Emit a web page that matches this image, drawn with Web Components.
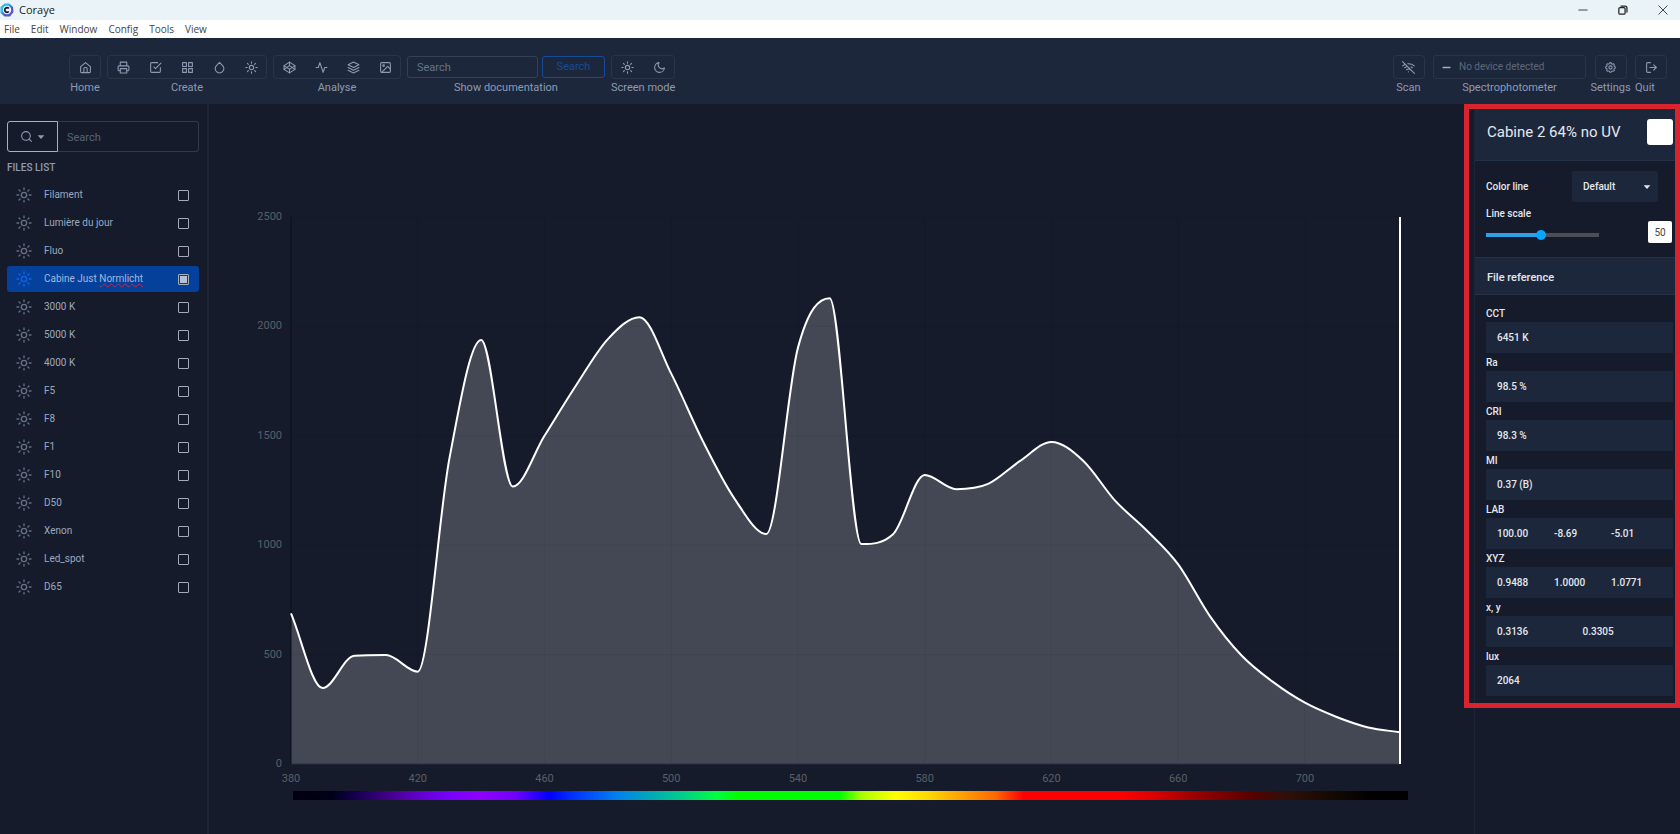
<!DOCTYPE html>
<html lang="en">
<head>
<meta charset="utf-8">
<title>Coraye</title>
<style>
  html, body { margin: 0; }
  body {
    --bg: #151b2a;
    --bar: #1d273b;
    --line: #2b3548;
    --text: #8d9bb2;
    background: var(--bg);
    color: var(--text);
    font-family: Roboto, "Liberation Sans", sans-serif;
    font-size: 11px;
    line-height: 14px;
  }
</style>
</head>
<body>
<cy-app></cy-app>

<script>
class Base extends HTMLElement {
  constructor() {
    super();
    this.attachShadow({ mode: "open" });
  }
  connectedCallback() {
    const t = document.createElement("template");
    t.innerHTML = `<style>*{box-sizing:border-box}button,input,select{font:inherit;color:inherit;margin:0}${this.css()}</style>${this.html()}`;
    this.shadowRoot.replaceChildren(t.content.cloneNode(true));
  }
}

const ICONS = {
  home: '<path d="M3 10.5 12 3l9 7.500V20a1.500 1.500 0 0 1-1.500 1.500h-15A1.500 1.500 0 0 1 3 20z"/><path d="M9 21v-7a2 2 0 0 1 2-2h2a2 2 0 0 1 2 2v7"/>',
  printer: '<path d="M6 9V2h12v7M6 18H4a2 2 0 0 1-2-2v-5a2 2 0 0 1 2-2h16a2 2 0 0 1 2 2v5a2 2 0 0 1-2 2h-2"/><path d="M6 14h12v8H6z"/>',
  check: '<path d="m9 11 3 3L22 4"/><path d="M21 12v7a2 2 0 0 1-2 2H5a2 2 0 0 1-2-2V5a2 2 0 0 1 2-2h11"/>',
  grid: '<path d="M3 3h7v7H3zM14 3h7v7h-7zM14 14h7v7h-7zM3 14h7v7H3z"/>',
  drop: '<path d="M12 2.700l5.700 5.700a8 8 0 1 1-11.300 0z"/>',
  sun: '<circle cx="12" cy="12" r="4"/><path d="M12 1.500v2.500M12 20v2.500M4.500 4.500l1.700 1.700M17.800 17.800l1.700 1.700M1.500 12H4M20 12h2.500M4.500 19.500l1.700-1.700M17.800 6.200l1.700-1.700"/>',
  poly: '<path d="M12 2l10 6.500v7L12 22 2 15.500v-7z"/><path d="M12 22v-6.500M22 8.500l-10 7-10-7"/><path d="M2 15.500l10-7 10 7M12 2v6.500"/>',
  pulse: '<path d="M22 12h-4l-3 9L9 3l-3 9H2"/>',
  layers: '<path d="M12 2 2 7l10 5 10-5z"/><path d="m2 17 10 5 10-5M2 12l10 5 10-5"/>',
  image: '<rect x="3" y="3" width="18" height="18" rx="2"/><circle cx="8.500" cy="8.500" r="1.500"/><path d="m21 15-5-5L5 21"/>',
  moon: '<path d="M21 12.800A9 9 0 1 1 11.200 3 7 7 0 0 0 21 12.800z"/>',
  wifioff: '<path d="M1 1l22 22M16.700 11.100A11 11 0 0 1 19 12.500M5 12.500a11 11 0 0 1 5.200-2.400M10.700 5.100A16 16 0 0 1 22.600 9M1.400 9a16 16 0 0 1 4.700-2.900M8.500 16.100a6 6 0 0 1 7 0M12 20h.01"/>',
  minus: '<path d="M3 12h18"/>',
  gear: '<circle cx="12" cy="12" r="3"/><path d="M10.300 4.300c.4-1.700 2.900-1.700 3.400 0a1.700 1.700 0 0 0 2.600 1.100c1.500-.9 3.300.8 2.400 2.400a1.700 1.700 0 0 0 1 2.500c1.800.4 1.800 2.900 0 3.400a1.700 1.700 0 0 0-1 2.600c.9 1.500-.9 3.300-2.400 2.400a1.700 1.700 0 0 0-2.600 1c-.5 1.800-3 1.800-3.400 0a1.700 1.700 0 0 0-2.600-1c-1.500.9-3.300-.9-2.400-2.400a1.700 1.700 0 0 0-1-2.600c-1.800-.5-1.800-3 0-3.400a1.700 1.700 0 0 0 1-2.600c-.9-1.500.9-3.300 2.400-2.400 1 .6 2.300.1 2.600-1z"/>',
  quit: '<path d="M10 21H5a2 2 0 0 1-2-2V5a2 2 0 0 1 2-2h5M16 17l5-5-5-5M21 12H9"/>',
  search: '<circle cx="11" cy="11" r="8"/><path d="m21 21-4.300-4.300"/>',
  caret: '<path fill="currentColor" stroke="none" d="M2 7h20L12 18z"/>',
  min: '<path d="M2 12h20"/>',
  restore: '<rect x="2" y="6" width="15" height="16" rx="3"/><path d="M7 2.500h10a4.500 4.500 0 0 1 4.500 4.500v10"/>',
  close: '<path d="M2 2l20 20M22 2 2 22"/>'
};

customElements.define("cy-icon", class extends Base {
  css() {
    const s = this.getAttribute("size") || 13;
    return `:host{display:block;flex:none;width:${s}px;height:${s}px}svg{display:block;width:100%;height:100%;fill:none;stroke:currentColor;stroke-linecap:round;stroke-linejoin:round}`;
  }
  html() {
    return `<svg viewBox="0 0 24 24" stroke-width="${this.getAttribute("weight") || 2}" aria-hidden="true">${ICONS[this.getAttribute("name")]}</svg>`;
  }
});

customElements.define("cy-window-bar", class extends Base {
  css() {
    return `
      :host{display:flex;align-items:center;height:20px;background:#eaf3f8;color:#222;font:11px/20px "Open Sans",sans-serif}
      .logo{width:14px;height:14px;margin-right:5px}
      .controls{margin-left:auto;display:flex;gap:12px;padding-right:3px}
      button{width:28px;height:18px;border:0;background:none;padding:0;display:grid;place-items:center;color:#222}`;
  }
  html() {
    return `
      <svg class="logo" viewBox="0 0 14 14" aria-hidden="true">
        <defs><linearGradient id="g" x1="0" y1="0" x2="1" y2="1"><stop offset=".35" stop-color="#35b8e8"/><stop offset=".6" stop-color="#5b55c8"/></linearGradient></defs>
        <path d="M4.500.5h5L13 4l.5 5-3.500 4.500H4.500L.5 10V4z" fill="url(#g)"/>
        <circle cx="7" cy="7" r="4.200" fill="#f4fbff"/>
        <path d="M8.800 5.500a2.300 2.300 0 1 0 0 3" fill="none" stroke="#10182c" stroke-width="1.800"/>
      </svg>
      <span>Coraye</span>
      <div class="controls">
        <button aria-label="Minimise"><cy-icon name="min" size="10"></cy-icon></button>
        <button aria-label="Restore"><cy-icon name="restore" size="10" weight="3"></cy-icon></button>
        <button aria-label="Close"><cy-icon name="close" size="10"></cy-icon></button>
      </div>`;
  }
});

customElements.define("cy-menu-bar", class extends Base {
  css() {
    return `
      :host{display:block;height:18px;background:#fff;color:#444;font:10px/18px "Open Sans",sans-serif}
      nav{display:flex;gap:11px;padding-left:4px}
      a{color:inherit;text-decoration:none}`;
  }
  html() {
    return `<nav>${["File", "Edit", "Window", "Config", "Tools", "View"].map(m => `<a href="#">${m}</a>`).join("")}</nav>`;
  }
});

/* A framed strip of icon buttons with a caption under it */
customElements.define("cy-tool-group", class extends Base {
  css() {
    return `
      :host{display:flex;flex-direction:column;align-items:center;gap:2px;white-space:nowrap}
      :host([caption-start]){align-items:flex-start}
      .box{display:flex;align-items:center;height:24px;gap:4px}
      .frame{box-shadow:inset 0 0 0 1px var(--line);border-radius:4px;gap:0}
      .caption{flex:none}
      :host([narrow]) {width:33px}
      button{width:32px;height:24px;border:0;background:none;padding:0;display:grid;place-items:center}`;
  }
  html() {
    const icons = this.getAttribute("icons");
    const box = icons
      ? `<div class="box frame">${icons.split(" ").map(i => { const [n, l] = i.split(":"); return `<button aria-label="${l}"><cy-icon name="${n}"></cy-icon></button>`; }).join("")}</div>`
      : `<div class="box"><slot></slot></div>`;
    return `${box}<div class="caption">${this.getAttribute("caption")}</div>`;
  }
});

customElements.define("cy-toolbar", class extends Base {
  css() {
    return `
      :host{display:flex;justify-content:space-between;height:66px;padding:17px 12px 0 69px;background:var(--bar)}
      .side{display:flex;align-items:flex-start;gap:6px}
      .right{gap:8px}
      input,.doc{height:22px;border:1px solid #344056;border-radius:3px;background:none}
      input{width:131px;padding:1px 9px 0;outline:0}
      input::placeholder{color:#66738a;opacity:1}
      .doc{width:63px;border-color:#174a98;color:#164a9c;padding:0}
      .device{display:flex;align-items:center;gap:8px;width:153px;height:24px;padding-left:8px;border:1px solid var(--line);border-radius:3px;font-size:10px;color:#5d687a}
      .device cy-icon{color:#a3adbd}`;
  }
  html() {
    return `
      <div class="side">
        <cy-tool-group icons="home:Home" caption="Home"></cy-tool-group>
        <cy-tool-group icons="printer:Print check:Check grid:Grid drop:Ink sun:Light" caption="Create"></cy-tool-group>
        <cy-tool-group icons="poly:Gamut pulse:Curve layers:Layers image:Image" caption="Analyse"></cy-tool-group>
        <cy-tool-group caption="Show documentation"><input type="text" placeholder="Search" aria-label="Search documentation"><button class="doc">Search</button></cy-tool-group>
        <cy-tool-group icons="sun:Light moon:Dark" caption="Screen mode"></cy-tool-group>
      </div>
      <div class="side right">
        <cy-tool-group narrow icons="wifioff:Scan" caption="Scan"></cy-tool-group>
        <cy-tool-group caption="Spectrophotometer"><div class="device"><cy-icon name="minus" size="9" weight="4"></cy-icon>No device detected</div></cy-tool-group>
        <cy-tool-group narrow icons="gear:Settings" caption="Settings"></cy-tool-group>
        <cy-tool-group narrow caption-start icons="quit:Quit" caption="Quit"></cy-tool-group>
      </div>`;
  }
});

customElements.define("cy-file-row", class extends Base {
  css() {
    return `
      :host{display:block;font-size:10px}
      label{display:flex;align-items:center;height:26px;padding:0 10px 0 9px;border-radius:3px;color:#9ba9c0}
      cy-icon{color:#667286;margin-right:12px}
      .name{flex:1}
      input{appearance:none;width:11px;height:11px;border:1px solid #a3abbb;border-radius:1px;outline:0}
      :host([selected]) label{background:#05409b;color:#a4b8dc}
      :host([selected]) cy-icon{color:#0f66f0}
      :host([selected]) input{background:#b4c0d6 content-box;padding:1px}
      ::slotted(u){text-decoration:underline wavy #c02a4c 1px;text-underline-offset:1px}`;
  }
  html() {
    return `<label><cy-icon name="sun" size="16"></cy-icon><span class="name"><slot></slot></span><input type="checkbox"${this.hasAttribute("selected") ? " checked" : ""}></label>`;
  }
});

customElements.define("cy-sidebar", class extends Base {
  css() {
    return `
      :host{display:block;width:209px;padding:17px 8px 0 7px;border-right:2px solid #1d2536}
      .search{display:flex;height:31px}
      button{display:flex;align-items:center;justify-content:center;gap:4px;width:51px;border:1px solid #a9b1be;border-radius:3px 0 0 3px;background:none;padding:0}
      input{flex:1;min-width:0;border:1px solid #303a4d;border-left:0;border-radius:0 3px 3px 0;background:none;padding:2px 9px 0;outline:0}
      input::placeholder{color:#56637a;opacity:1}
      h2{margin:9px 0 7px;font-size:10px;line-height:14px;font-weight:500;letter-spacing:0}
      .files{display:grid;gap:2px}`;
  }
  html() {
    const files = ["Filament", "Lumière du jour", "Fluo", "Cabine Just <u>Normlicht</u>", "3000 K", "5000 K", "4000 K", "F5", "F8", "F1", "F10", "D50", "Xenon", "Led_spot", "D65"];
    return `
      <div class="search"><button aria-label="Search filter"><cy-icon name="search" size="13"></cy-icon><cy-icon name="caret" size="8"></cy-icon></button><input type="text" placeholder="Search" aria-label="Search files"></div>
      <h2>FILES LIST</h2>
      <div class="files">${files.map((f, i) => `<cy-file-row${i === 3 ? " selected" : ""}>${f}</cy-file-row>`).join("")}</div>`;
  }
});

/* Spectral power, one value every 10 nm from 380 nm */
const POWER = [688, 347, 495, 498, 422, 1397, 1938, 1268, 1500, 1731, 1942, 2042, 1784, 1475, 1212, 1051, 1903, 2129, 1005, 1050, 1321, 1256, 1280, 1384, 1472, 1386, 1205, 1068, 912, 676, 496, 374, 280, 215, 167, 145];

function monotonePath(values) {
  const n = values.length, d = [], m = [];
  for (let i = 0; i < n - 1; i++) d.push(values[i + 1] - values[i]);
  m[0] = d[0];
  m[n - 1] = d[n - 2];
  for (let i = 1; i < n - 1; i++) m[i] = d[i - 1] * d[i] <= 0 ? 0 : (d[i - 1] + d[i]) / 2;
  for (let i = 0; i < n - 1; i++) {
    if (!d[i]) { m[i] = m[i + 1] = 0; continue; }
    const a = m[i] / d[i], b = m[i + 1] / d[i], s = a * a + b * b;
    if (s > 9) {
      const t = 3 / Math.sqrt(s);
      m[i] = t * a * d[i];
      m[i + 1] = t * b * d[i];
    }
  }
  let p = `M0 ${2500 - values[0]}`;
  for (let i = 0; i < n - 1; i++) {
    const x = i * 10;
    p += `C${x + 10 / 3} ${2500 - values[i] - m[i] / 3} ${x + 20 / 3} ${2500 - values[i + 1] + m[i + 1] / 3} ${x + 10} ${2500 - values[i + 1]}`;
  }
  return p;
}

customElements.define("cy-spectrum-chart", class extends Base {
  css() {
    return `
      :host{display:grid;flex:1;min-width:0;grid-template:minmax(300px,1fr) 14px 9px / 73px minmax(0,1fr);column-gap:9px;padding:113px 74px 47px 0;font-size:11px;color:#5b5f68}
      .y{display:flex;flex-direction:column;justify-content:space-between;text-align:right;margin:-7px 0}
      svg{display:block;contain:size;width:100%;height:100%;overflow:visible;grid-area:1/2}
      svg *{vector-effect:non-scaling-stroke}
      .x{grid-area:2/2;display:grid;grid-template-columns:repeat(8,4fr) 3fr;margin-top:8px}
      .x span{width:40px;margin-left:-20px;text-align:center}
      .band{grid-area:3/2;margin:13px -8px -13px 2px;background:linear-gradient(90deg,#000010,#000018 3.500%,#150050 5.600%,#45008a 8.700%,#6000c8 11%,#7800ff 14%,#8f00ff 17%,#7000ff 20%,#0000ff 23%,#0030ff 25%,#0080f0 29%,#00a8b8 32%,#00d088 35%,#00ff40 38%,#00ff00 40%,#00ff00 49%,#a8ff00 51%,#ffff00 54%,#ffd800 57%,#ffa000 60%,#ff6800 63%,#ff0000 65.500%,#ff0000 74%,#e00000 77%,#a00000 80.500%,#580000 86%,#301008 89%,#100800 94%,#000 97%)}`;
  }
  html() {
    const curve = monotonePath(POWER);
    let lines = "";
    for (let x = 40; x < 350; x += 40) lines += `M${x} 0V2500`;
    for (let y = 0; y < 2500; y += 500) lines += `M0 ${y}H350`;
    return `
      <div class="y">${[2500, 2000, 1500, 1000, 500, 0].map(v => `<span>${v}</span>`).join("")}</div>
      <svg viewBox="0 0 350 2500" preserveAspectRatio="none" role="img" aria-label="Spectral power distribution">
        <path d="${curve}V2500H0Z" fill="#fff" fill-opacity=".2"/>
        <path d="${lines}" stroke="#000" stroke-opacity=".06" fill="none"/>
        <path d="M0 0V2500" stroke="#090e1a" fill="none"/>
        <path d="M0 2500H350" stroke="#2b303c" fill="none"/>
        <path d="${curve}" stroke="#fff" stroke-width="2" fill="none"/>
        <path d="M350 0V2500" stroke="#fff" stroke-width="2"/>
      </svg>
      <div class="x">${[380, 420, 460, 500, 540, 580, 620, 660, 700].map(v => `<span>${v}</span>`).join("")}</div>
      <div class="band"></div>`;
  }
});

customElements.define("cy-reading", class extends Base {
  css() {
    return `
      :host{display:block}
      dl{margin:0 0 3px}
      dt{line-height:14px;padding-bottom:1px}
      .values{display:flex;height:31px;background:var(--bar);padding:0 5px 0 11px;align-items:center}
      dd{margin:0;flex:1}`;
  }
  html() {
    return `<dl><dt>${this.getAttribute("label")}</dt><div class="values">${this.getAttribute("values").split(" | ").map(v => `<dd>${v}</dd>`).join("")}</div></dl>`;
  }
});

customElements.define("cy-inspector", class extends Base {
  css() {
    return `
      :host{display:block;position:relative;width:206px;border-left:1px solid #1c2435;color:#e4e8ee;font-size:10px;font-weight:500}
      header{display:flex;align-items:center;justify-content:space-between;height:57px;padding:0 7px 0 12px;background:var(--bar);border-bottom:1px solid #243146}
      h1{margin:0;font-size:15px;line-height:20px;font-weight:400}
      .swatch{width:26px;height:26px;border:0;border-radius:3px;background:#fff;padding:0}
      .form{padding:10px 22px 0 11px;height:96px}
      .row{display:flex;align-items:center;justify-content:space-between}
      .select{display:grid;align-items:center;width:86px;height:31px}
      select{grid-area:1/1;appearance:none;width:100%;height:100%;border:0;border-radius:2px;background:var(--bar);padding:0 11px;outline:0}
      .select cy-icon{grid-area:1/1;justify-self:end;margin-right:7px;pointer-events:none}
      .scale{display:grid;grid-template-columns:113px 24px;justify-content:space-between;margin:5px -14px 0 0}
      .scale label{line-height:14px}
      input[type=range]{grid-area:2/1;appearance:none;width:113px;height:12px;background:linear-gradient(90deg,#2f9fe6 49%,#4b4e55 49%) center/100% 4px no-repeat;border-radius:2px;outline:0;margin:8px 0 2px}
      input[type=range]::-webkit-slider-thumb{appearance:none;width:10px;height:10px;border-radius:50%;background:#0aa5ff}
      .num{grid-area:1/2/3/3;align-self:end;width:24px;height:22px;border:0;border-radius:2px;background:#fff;color:#444;text-align:center;padding:0;font-weight:400}
      h2{margin:0;height:38px;padding:0 12px;font-size:11px;line-height:39px;font-weight:500;background:var(--bar);border:1px solid #243146;border-width:1px 0}
      .readings{padding:12px 7px 0 11px}
      .outline{position:absolute;top:0;left:-11px;right:0;height:604px;border:5px solid #d9232e;pointer-events:none}`;
  }
  html() {
    const rows = [["CCT", "6451 K"], ["Ra", "98.5 %"], ["CRI", "98.3 %"], ["MI", "0.37 (B)"], ["LAB", "100.00 | -8.69 | -5.01"], ["XYZ", "0.9488 | 1.0000 | 1.0771"], ["x, y", "0.3136 | 0.3305"], ["lux", "2064"]];
    return `
      <header><h1>Cabine 2 64% no UV</h1><button class="swatch" aria-label="Colour"></button></header>
      <div class="form">
        <div class="row"><label for="line">Color line</label>
          <div class="select"><select id="line"><option>Default</option></select><cy-icon name="caret" size="8"></cy-icon></div></div>
        <div class="scale"><label for="scale">Line scale</label><input id="scale" type="range" value="49"><input class="num" type="text" value="50" aria-label="Line scale value"></div>
      </div>
      <h2>File reference</h2>
      <div class="readings">${rows.map(([l, v]) => `<cy-reading label="${l}" values="${v}"></cy-reading>`).join("")}</div>
      <div class="outline"></div>`;
  }
});

customElements.define("cy-app", class extends Base {
  css() {
    return `
      :host{display:flex;flex-direction:column;min-height:100vh}
      main{display:flex;flex:1}
      cy-sidebar,cy-inspector{flex:none}`;
  }
  html() {
    return `<cy-window-bar></cy-window-bar><cy-menu-bar></cy-menu-bar><cy-toolbar></cy-toolbar>
      <main><cy-sidebar></cy-sidebar><cy-spectrum-chart></cy-spectrum-chart><cy-inspector></cy-inspector></main>`;
  }
});
</script>
</body>
</html>
